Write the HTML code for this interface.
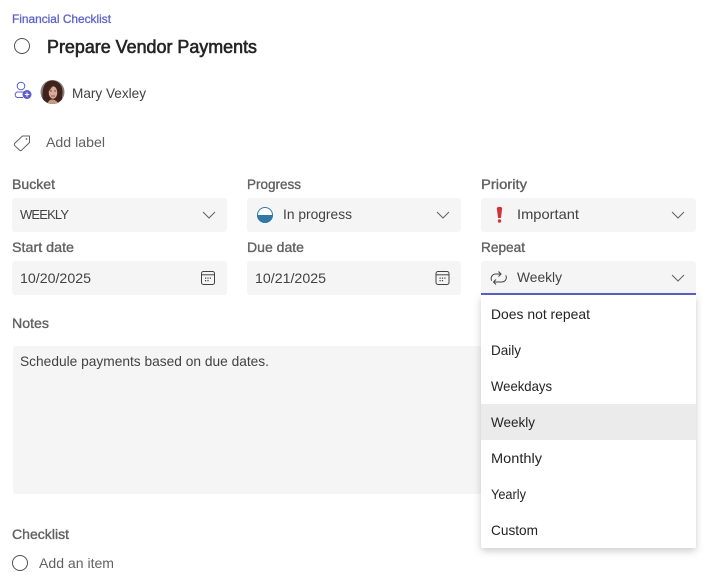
<!DOCTYPE html>
<html>
<head>
<meta charset="utf-8">
<style>
html,body{margin:0;padding:0;background:#fff;width:703px;height:587px;overflow:hidden}
svg{position:absolute;left:0;top:0;display:block}
text{font-family:"Liberation Sans",sans-serif;font-size:14px;white-space:pre}
.l{fill:#616161;stroke:#616161;stroke-width:.35}
.v{fill:#424242}
.m{fill:#242424}
.ic{fill:none;stroke:#424242;stroke-width:1}
</style>
</head>
<body>
<svg width="703" height="587" viewBox="0 0 703 587" xmlns="http://www.w3.org/2000/svg">
<defs>
<filter id="sh" x="-15%" y="-10%" width="130%" height="125%"><feDropShadow dx="0" dy="3" stdDeviation="4" flood-color="#000" flood-opacity=".2"/></filter>
<clipPath id="av"><circle cx="52.500" cy="92" r="12"/></clipPath>
<clipPath id="pr"><rect x="257" y="215" width="18" height="10"/></clipPath>
</defs>

<text x="12" y="23" textLength="99" lengthAdjust="spacingAndGlyphs" style="font-size:12px;fill:#5f62c9;stroke:#5f62c9;stroke-width:.3">Financial Checklist</text>
<circle cx="22" cy="46" r="7.500" fill="none" stroke="#505050" stroke-width="1"/>
<text x="47" y="53" textLength="210" lengthAdjust="spacingAndGlyphs" style="font-size:18px;fill:#242424;stroke:#242424;stroke-width:.6">Prepare Vendor Payments</text>

<!-- assign icon -->
<circle cx="21" cy="86" r="3.800" fill="none" stroke="#5b5fc7" stroke-width="1"/>
<path d="M24 92H17.500a2.800 2.800 0 0 0 0 5.500H23" fill="none" stroke="#5b5fc7" stroke-width="1"/>
<circle cx="27" cy="94.500" r="4.500" fill="#5b5fc7"/>
<path d="M27 92.300v4.400M24.800 94.500h4.400" stroke="#fff" stroke-width="1"/>

<!-- avatar -->
<g clip-path="url(#av)">
<rect x="40" y="80" width="25" height="25" fill="#8d7f76"/>
<path d="M43 104Q41 88 46 83Q52 78 59 83Q64 88 62 97Q63 102 60 104Z" fill="#3d231c"/>
<ellipse cx="53" cy="92.500" rx="4.300" ry="6.200" fill="#d8ab98"/>
<path d="M47.500 92Q49 84 56 85.500Q52 85.500 50 90Z" fill="#4a2a20"/>
<path d="M47 104Q49 99.500 52 99.500Q56 99.500 59 104Z" fill="#c79b88"/>
<path d="M51 96h4" stroke="#a0504a" stroke-width=".9"/>
<path d="M49.800 91h2M54.200 91h2" stroke="#3d231c" stroke-width=".8"/>
</g>
<text x="72" y="98" textLength="74" lengthAdjust="spacingAndGlyphs" class="v">Mary Vexley</text>

<!-- tag -->
<path d="M14.500 143.500L22.500 136H29.500V142.500L21.500 150.300Q20.500 151 19.500 150.200L14.600 145.500Q14 144.400 14.500 143.500Z" fill="none" stroke="#616161" stroke-width="1"/>
<circle cx="26.500" cy="139" r=".9" fill="#616161"/>
<text x="46" y="147" textLength="59" lengthAdjust="spacingAndGlyphs" fill="#616161">Add label</text>

<!-- labels -->
<text x="12" y="189" textLength="43" lengthAdjust="spacingAndGlyphs" class="l">Bucket</text>
<text x="247" y="189" textLength="54" lengthAdjust="spacingAndGlyphs" class="l">Progress</text>
<text x="481" y="189" textLength="46" lengthAdjust="spacingAndGlyphs" class="l">Priority</text>
<text x="12" y="252" textLength="62" lengthAdjust="spacingAndGlyphs" class="l">Start date</text>
<text x="247" y="252" textLength="57" lengthAdjust="spacingAndGlyphs" class="l">Due date</text>
<text x="481" y="252" textLength="44" lengthAdjust="spacingAndGlyphs" class="l">Repeat</text>
<text x="12" y="328" textLength="37" lengthAdjust="spacingAndGlyphs" class="l">Notes</text>
<text x="12" y="539" textLength="57" lengthAdjust="spacingAndGlyphs" class="l">Checklist</text>

<!-- fields -->
<rect x="12" y="198" width="215" height="34" rx="3" fill="#f5f5f5"/>
<rect x="247" y="198" width="214" height="34" rx="3" fill="#f5f5f5"/>
<rect x="481" y="198" width="215" height="34" rx="3" fill="#f5f5f5"/>
<rect x="12" y="261" width="215" height="34" rx="3" fill="#f5f5f5"/>
<rect x="247" y="261" width="214" height="34" rx="3" fill="#f5f5f5"/>
<rect x="481" y="261" width="215" height="34" rx="3" fill="#f5f5f5"/>
<rect x="481" y="293" width="215" height="2" fill="#5b5fc7"/>
<rect x="13" y="346" width="480" height="148" rx="2" fill="#f5f5f5"/>

<text x="20" y="219" textLength="49" lengthAdjust="spacing" style="font-size:13px" class="v">WEEKLY</text>
<text x="283" y="219" textLength="69" lengthAdjust="spacingAndGlyphs" class="v">In progress</text>
<text x="517" y="219" textLength="62" lengthAdjust="spacingAndGlyphs" class="v">Important</text>
<text x="20" y="283" textLength="71" lengthAdjust="spacingAndGlyphs" class="v">10/20/2025</text>
<text x="255" y="283" textLength="71" lengthAdjust="spacingAndGlyphs" class="v">10/21/2025</text>
<text x="517" y="282" textLength="45" lengthAdjust="spacingAndGlyphs" class="v">Weekly</text>
<text x="20" y="366" textLength="249" lengthAdjust="spacingAndGlyphs" class="v">Schedule payments based on due dates.</text>

<!-- chevrons -->
<path d="M203 212l6 6 6-6M437 212l6 6 6-6M672 212l6 6 6-6M672 275l6 6 6-6" fill="none" stroke="#616161" stroke-width="1"/>

<!-- progress -->
<circle cx="265" cy="215" r="7.500" fill="#fff" stroke="#2f78a8" stroke-width="1"/>
<circle cx="265" cy="215" r="8" fill="#2f78a8" clip-path="url(#pr)"/>

<!-- priority -->
<path d="M497.300 208Q499.500 206.500 501.700 208L500.500 217.500H498.500Z" fill="#d13438" stroke="#d13438" stroke-width="1" stroke-linejoin="round"/>
<circle cx="499.500" cy="221" r="1.700" fill="#d13438"/>

<!-- calendars -->
<g class="ic">
<rect x="201.500" y="271.500" width="13" height="13" rx="2"/>
<path d="M202 274.800h12"/>
<rect x="436" y="271.500" width="13" height="13" rx="2"/>
<path d="M436.500 274.800h12"/>
</g>
<path d="M205 277.500h1.200v1.200H205zM207.400 277.500h1.200v1.200h-1.200zM209.800 277.500h1.200v1.200h-1.200zM205 280h1.200v1.200H205zM207.400 280h1.200v1.200h-1.200zM439.500 277.500h1.200v1.200h-1.200zM441.900 277.500h1.200v1.200h-1.200zM444.300 277.500h1.200v1.200h-1.200zM439.500 280h1.200v1.200h-1.200zM441.900 280h1.200v1.200h-1.200z" fill="#424242"/>

<!-- repeat -->
<path d="M498.500 271.500l2.500 2.500-2.500 2.500M501 274H495.500a4.500 4.500 0 0 0-3.700 6.800M499.500 277.800a0 0 0 0 0 0 0M496 284.500l-2.500-2.500 2.500-2.500M493.500 282H502a4.500 4.500 0 0 0 3.700-6.800" fill="none" stroke="#424242" stroke-width="1"/>

<!-- menu -->
<rect x="481" y="295" width="215" height="253" rx="2" fill="#fff" filter="url(#sh)"/>
<rect x="481" y="404" width="215" height="36" fill="#ebebeb"/>
<text x="491" y="319" textLength="99" lengthAdjust="spacingAndGlyphs" class="m">Does not repeat</text>
<text x="491" y="355" textLength="30" lengthAdjust="spacingAndGlyphs" class="m">Daily</text>
<text x="491" y="391" textLength="61" lengthAdjust="spacingAndGlyphs" class="m">Weekdays</text>
<text x="491" y="427" textLength="44" lengthAdjust="spacingAndGlyphs" class="m">Weekly</text>
<text x="491" y="463" textLength="51" lengthAdjust="spacingAndGlyphs" class="m">Monthly</text>
<text x="491" y="499" textLength="35" lengthAdjust="spacingAndGlyphs" class="m">Yearly</text>
<text x="491" y="535" textLength="47" lengthAdjust="spacingAndGlyphs" class="m">Custom</text>

<!-- checklist -->
<circle cx="20" cy="563" r="7.500" fill="none" stroke="#505050" stroke-width="1"/>
<text x="39" y="568" textLength="75" lengthAdjust="spacingAndGlyphs" fill="#616161">Add an item</text>
</svg>
</body>
</html>
